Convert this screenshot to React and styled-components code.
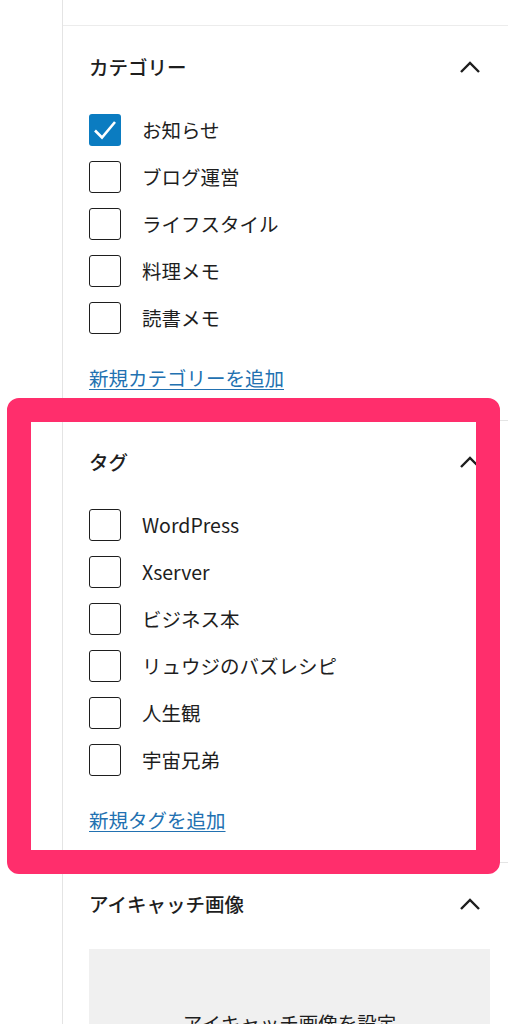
import React from "react";
import styled, { createGlobalStyle } from "styled-components";

const GlobalStyle = createGlobalStyle`
  html, body {
    margin: 0;
    padding: 0;
    background: #fff;
  }
  body {
    font-family: "Noto Sans CJK JP", "Noto Sans", sans-serif;
    color: #1e1e1e;
    overflow: hidden;
  }
`;

const Page = styled.div`
  position: relative;
  display: flex;
  width: 508px;
  height: 1024px;
  overflow: hidden;
`;

const Gutter = styled.div`
  width: 62px;
  flex-shrink: 0;
`;

const Sidebar = styled.div`
  flex: 1;
  border-left: 1px solid #e4e4e4;
  display: flex;
  flex-direction: column;
`;

const TopSpacer = styled.div`
  height: 25px;
  flex-shrink: 0;
  border-bottom: 1px solid #ececec;
`;

const Panel = styled.section`
  border-bottom: 1px solid #e4e4e4;
  flex-shrink: 0;
`;

const PanelHeader = styled.div`
  height: 82px;
  display: flex;
  align-items: center;
  justify-content: space-between;
  padding: 0 18px 0 26px;
`;

const PanelTitle = styled.h2`
  margin: 0;
  font-size: 19.5px;
  font-weight: 500;
  line-height: 1;
  color: #1e1e1e;
`;

const Toggle = styled.span`
  display: flex;
  align-items: center;
  justify-content: center;
  width: 20px;
  margin-right: 10px;
`;

const PanelBody = styled.div`
  padding: 6px 18px 28px 26px;
`;

const CheckList = styled.ul`
  list-style: none;
  margin: 0;
  padding: 0;
  display: flex;
  flex-direction: column;
  gap: 15px;
`;

const CheckRow = styled.li`
  display: flex;
  align-items: center;
  gap: 21px;
  height: 32px;
`;

const Box = styled.span`
  box-sizing: border-box;
  width: 32px;
  height: 32px;
  border-radius: 3px;
  flex-shrink: 0;
  display: flex;
  align-items: center;
  justify-content: center;
  border: ${(p) => (p.checked ? "none" : "1.5px solid #1e1e1e")};
  background: ${(p) => (p.checked ? "#0b7cc1" : "#fff")};
`;

const Label = styled.span`
  font-size: 19.5px;
  line-height: 1;
  color: #1e1e1e;
`;

const AddLink = styled.a`
  display: inline-block;
  margin-top: 30px;
  font-size: 19.5px;
  line-height: 28px;
  color: #2271b1;
  text-decoration: underline;
  text-underline-offset: 3px;
  text-decoration-thickness: 1px;
`;

const ImageBody = styled.div`
  padding: 4px 18px 0 26px;
`;

const ImagePlaceholder = styled.div`
  height: 146px;
  background: #f0f0f0;
  display: flex;
  align-items: center;
  justify-content: center;
  font-size: 19.5px;
  color: #1e1e1e;
`;

const Highlight = styled.div`
  position: absolute;
  left: 7px;
  top: 398px;
  width: 493px;
  height: 476px;
  box-sizing: border-box;
  border: 24px solid #ff2e6c;
  border-radius: 12px;
  pointer-events: none;
`;

const ChevronUp = () => (
  <svg width="20" height="12" viewBox="0 0 20 12" fill="none">
    <path d="M1 11 L10 2 L19 11" stroke="#1e1e1e" strokeWidth="2.4" />
  </svg>
);

const Check = () => (
  <svg width="26" height="22" viewBox="0 0 26 22" fill="none">
    <path d="M3 11.5 L10 18.5 L23 3" stroke="#fff" strokeWidth="2.6" />
  </svg>
);

const categories = [
  { name: "お知らせ", checked: true },
  { name: "ブログ運営" },
  { name: "ライフスタイル" },
  { name: "料理メモ" },
  { name: "読書メモ" },
];

const tags = [
  { name: "WordPress" },
  { name: "Xserver" },
  { name: "ビジネス本" },
  { name: "リュウジのバズレシピ" },
  { name: "人生観" },
  { name: "宇宙兄弟" },
];

const CheckPanel = ({ title, items, linkText }) => (
  <Panel>
    <PanelHeader>
      <PanelTitle>{title}</PanelTitle>
      <Toggle>
        <ChevronUp />
      </Toggle>
    </PanelHeader>
    <PanelBody>
      <CheckList>
        {items.map((item) => (
          <CheckRow key={item.name}>
            <Box checked={item.checked}>{item.checked && <Check />}</Box>
            <Label>{item.name}</Label>
          </CheckRow>
        ))}
      </CheckList>
      <AddLink href="#">{linkText}</AddLink>
    </PanelBody>
  </Panel>
);

const App = () => (
  <>
    <GlobalStyle />
    <Page>
      <Gutter />
      <Sidebar>
        <TopSpacer />
        <CheckPanel
          title="カテゴリー"
          items={categories}
          linkText="新規カテゴリーを追加"
        />
        <CheckPanel title="タグ" items={tags} linkText="新規タグを追加" />
        <Panel>
          <PanelHeader>
            <PanelTitle>アイキャッチ画像</PanelTitle>
            <Toggle>
              <ChevronUp />
            </Toggle>
          </PanelHeader>
          <ImageBody>
            <ImagePlaceholder>アイキャッチ画像を設定</ImagePlaceholder>
          </ImageBody>
        </Panel>
      </Sidebar>
      <Highlight />
    </Page>
  </>
);

export default App;
